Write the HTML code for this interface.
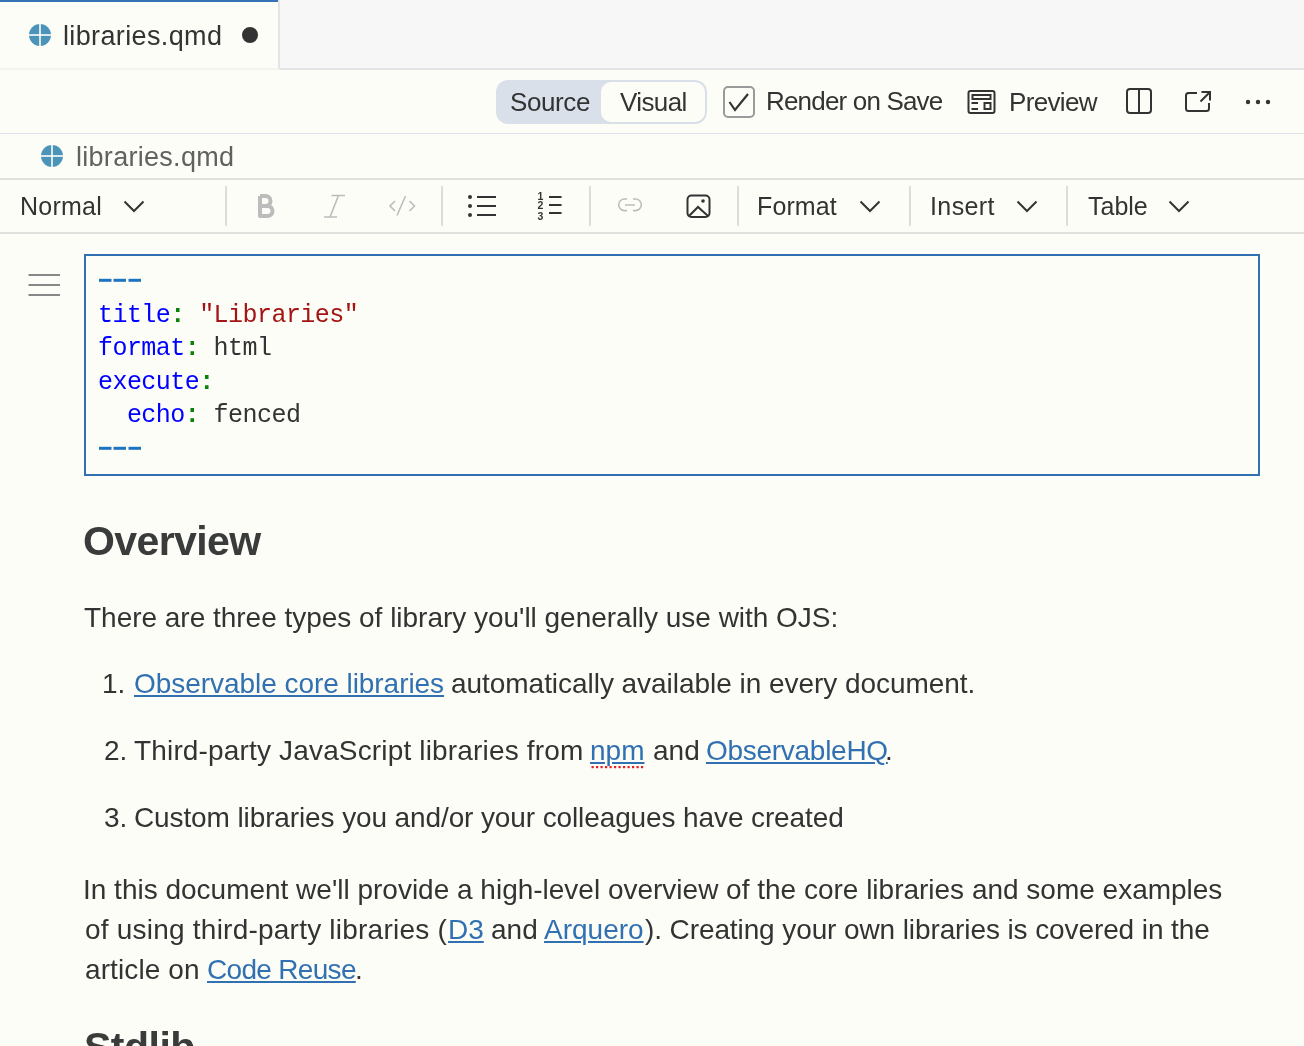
<!DOCTYPE html>
<html><head><meta charset="utf-8">
<style>
html,body{margin:0;padding:0;}
body{width:1304px;height:1046px;overflow:hidden;position:relative;background:#fdfdf7;font-family:"Liberation Sans",sans-serif;color:#333;}
.a{position:absolute;white-space:nowrap;}
.t{position:absolute;white-space:nowrap;line-height:1;will-change:transform;}
svg#ov{position:absolute;left:0;top:0;overflow:visible;}
#tabbar{position:absolute;left:0;top:0;width:1304px;height:68px;background:#f7f7f7;border-bottom:2px solid #e4e4e4;}
#tab{position:absolute;left:0;top:0;width:278px;height:68px;background:#fdfdf7;border-right:2px solid #e4e4e4;border-bottom:2px solid #f3f3f1;}
#tabtop{position:absolute;left:0;top:0;width:278px;height:2px;background:#3573b4;}
#tb{position:absolute;left:0;top:70px;width:1304px;height:63px;border-bottom:1px solid #dde2ea;}
#bc{position:absolute;left:0;top:134px;width:1304px;height:44px;border-bottom:2px solid #e0e0de;}
#ft{position:absolute;left:0;top:180px;width:1304px;height:52px;border-bottom:2px solid #e0e0de;}
.sep{position:absolute;top:186px;width:2px;height:40px;background:#dfdfdd;}
#yaml{position:absolute;left:84px;top:254px;width:1172px;height:218px;border:2px solid #3171b2;}
.mono{font-family:"Liberation Mono",monospace;font-size:25px;letter-spacing:-0.55px;white-space:pre;}
.kw{color:#0000ff;}
.col{color:#098209;font-weight:bold;}
.str{color:#a31515;}
.dash{color:#1e73c2;}
.body{font-size:28px;color:#333;}
a{color:#3171b2;text-decoration:underline;text-decoration-thickness:2px;text-underline-offset:2px;}
</style></head><body>
<div id="tabbar"></div>
<div id="tab"></div>
<div id="tabtop"></div>
<div id="tb"></div>
<div id="bc"></div>
<div id="ft"></div>

<!-- tab -->
<div class="t" id="tabl" style="left:63.00px;top:23.14px;font-size:27px;color:#333;letter-spacing:0.363px;">libraries.qmd</div>

<!-- toolbar -->
<div class="a" style="left:496px;top:80px;width:211px;height:44px;border-radius:12px;background:#dae0ea;"></div>
<div class="a" style="left:601px;top:82px;width:104px;height:40px;border-radius:10px;background:#fdfdf7;"></div>
<div class="t" id="src" style="left:510.00px;top:88.99px;font-size:26px;color:#333;letter-spacing:-0.400px;">Source</div>
<div class="t" id="vis" style="left:620.00px;top:88.99px;font-size:26px;color:#333;letter-spacing:-0.600px;">Visual</div>
<div class="a" style="left:723px;top:86px;width:28px;height:28px;border:2px solid #9a9a9a;border-radius:5px;"></div>
<div class="t" id="ros" style="left:766.00px;top:88.49px;font-size:26px;color:#333;letter-spacing:-0.819px;">Render on Save</div>
<div class="t" id="prev" style="left:1009.00px;top:88.99px;font-size:26px;color:#333;letter-spacing:-0.667px;">Preview</div>

<!-- breadcrumb -->
<div class="t" id="bcl" style="left:76.00px;top:144.14px;font-size:27px;color:#616161;letter-spacing:0.287px;">libraries.qmd</div>

<!-- format toolbar -->
<div class="t" id="norm" style="left:20.22px;top:193.84px;font-size:25px;color:#333;letter-spacing:0.240px;">Normal</div>
<div class="sep" style="left:225px"></div>
<div class="sep" style="left:441px"></div>
<div class="sep" style="left:589px"></div>
<div class="sep" style="left:737px"></div>
<div class="sep" style="left:909px"></div>
<div class="sep" style="left:1066px"></div>
<div class="t" id="fmt" style="left:757.00px;top:193.84px;font-size:25px;color:#333;letter-spacing:0.120px;">Format</div>
<div class="t" id="ins" style="left:930.00px;top:193.84px;font-size:25px;color:#333;letter-spacing:0.400px;">Insert</div>
<div class="t" id="tbl" style="left:1088.00px;top:193.84px;font-size:25px;color:#333;letter-spacing:0.000px;">Table</div>


<!-- hamburger -->

<div id="yaml"></div>
<div class="t mono" id="m1" style="left:97.5px;top:302.8px;"><span class="kw">title</span><span class="col">:</span> <span class="str">"Libraries"</span></div>
<div class="t mono" id="m2" style="left:97.5px;top:336.1px;"><span class="kw">format</span><span class="col">:</span> html</div>
<div class="t mono" id="m3" style="left:97.5px;top:369.5px;"><span class="kw">execute</span><span class="col">:</span></div>
<div class="t mono" id="m4" style="left:97.5px;top:402.8px;">  <span class="kw">echo</span><span class="col">:</span> fenced</div>
<div class="t" id="h1" style="left:83.00px;top:521.29px;font-size:41px;font-weight:bold;color:#3a3c3c;letter-spacing:-0.594px;">Overview</div>
<div class="t body" id="p1" style="font-size:28px;left:84.00px;top:604.30px;letter-spacing:-0.019px;">There are three types of library you'll generally use with OJS:</div>
<div class="t body" id="l1a" style="font-size:28px;left:102.00px;top:670.30px;letter-spacing:0.000px;">1.</div>
<div class="t body" id="l1b" style="font-size:28px;left:134.00px;top:670.30px;letter-spacing:-0.047px;"><a>Observable core libraries</a></div>
<div class="t body" id="l1c" style="font-size:28px;left:451.00px;top:670.30px;letter-spacing:-0.043px;">automatically available in every document.</div>
<div class="t body" id="l2a" style="font-size:28px;left:103.75px;top:737.30px;letter-spacing:0.000px;">2.</div>
<div class="t body" id="l2b" style="font-size:28px;left:133.86px;top:737.30px;letter-spacing:0.161px;">Third-party JavaScript libraries from</div>
<div class="t body" id="l2c" style="font-size:28px;left:589.75px;top:737.30px;letter-spacing:0.000px;"><a>npm</a></div>
<div class="t body" id="l2d" style="font-size:28px;left:652.73px;top:737.30px;letter-spacing:0.000px;">and</div>
<div class="t body" id="l2e" style="font-size:28px;left:705.73px;top:737.30px;letter-spacing:-0.279px;"><a>ObservableHQ</a></div>
<div class="t body" id="l2f" style="font-size:28px;left:885.00px;top:737.30px;letter-spacing:0.000px;">.</div>
<div class="t body" id="l3a" style="font-size:28px;left:103.75px;top:804.30px;letter-spacing:0.000px;">3.</div>
<div class="t body" id="l3b" style="font-size:28px;left:134.00px;top:804.30px;letter-spacing:-0.113px;">Custom libraries you and/or your colleagues have created</div>
<div class="t body" id="q1" style="font-size:28px;left:83.39px;top:876.30px;letter-spacing:-0.006px;">In this document we'll provide a high-level overview of the core libraries and some examples</div>
<div class="t body" id="q2a" style="font-size:28px;left:84.83px;top:916.30px;letter-spacing:0.224px;">of using third-party libraries (</div>
<div class="t body" id="q2b" style="font-size:28px;left:447.91px;top:916.30px;letter-spacing:0.000px;"><a>D3</a></div>
<div class="t body" id="q2c" style="font-size:28px;left:490.64px;top:916.30px;letter-spacing:0.000px;">and</div>
<div class="t body" id="q2d" style="font-size:28px;left:544.00px;top:916.30px;letter-spacing:-0.003px;"><a>Arquero</a></div>
<div class="t body" id="q2e" style="font-size:28px;left:645.00px;top:916.30px;letter-spacing:-0.103px;">). Creating your own libraries is covered in the</div>
<div class="t body" id="q3a" style="font-size:28px;left:84.83px;top:956.30px;letter-spacing:0.111px;">article on</div>
<div class="t body" id="q3b" style="font-size:28px;left:206.55px;top:956.30px;letter-spacing:-0.689px;"><a>Code Reuse</a></div>
<div class="t body" id="q3c" style="font-size:28px;left:355.00px;top:956.30px;letter-spacing:0.000px;">.</div>
<div class="t" id="h2" style="left:83.85px;top:1026.79px;font-size:41px;font-weight:bold;color:#3a3c3c;letter-spacing:-0.500px;">Stdlib</div>
<svg id="ov" width="1304" height="1046" viewBox="0 0 1304 1046">
<!-- quarto icons -->
<g id="qi1"><circle cx="40" cy="35" r="11" fill="#4b93b8"/><rect x="39.2" y="24" width="1.6" height="22" fill="#fdfdf7"/><rect x="29" y="34.2" width="22" height="1.6" fill="#fdfdf7"/></g>
<circle cx="250" cy="35" r="8" fill="#333"/>
<g><circle cx="52" cy="156" r="11" fill="#4b93b8"/><rect x="51.2" y="145" width="1.6" height="22" fill="#fdfdf7"/><rect x="41" y="155.2" width="22" height="1.6" fill="#fdfdf7"/></g>
<!-- checkbox check -->
<path d="M729.5 102 L735 110 L748 94" fill="none" stroke="#333" stroke-width="2.2"/>
<!-- preview icon -->
<g fill="none" stroke="#333" stroke-width="2">
<rect x="968.5" y="91" width="26" height="22" rx="2"/>
<rect x="972.5" y="95" width="18" height="4"/>
<path d="M971.5 103 H978 M971.5 109 H978"/>
<rect x="984.5" y="103" width="6" height="6"/>
<!-- split -->
<rect x="1127" y="89" width="24" height="24" rx="3"/>
<path d="M1139 89 V113"/>
<!-- external -->
<path d="M1197 93 H1188.5 Q1186 93 1186 95.5 V108.5 Q1186 111 1188.5 111 H1206.5 Q1209 111 1209 108.5 V103"/>
<path d="M1200.5 101.5 L1209.5 92.5 M1201.5 92 H1210 V100.5"/>
</g>
<circle cx="1248" cy="102" r="2.2" fill="#333"/><circle cx="1258" cy="102" r="2.2" fill="#333"/><circle cx="1268" cy="102" r="2.2" fill="#333"/>
<!-- chevrons -->
<g fill="none" stroke="#333" stroke-width="2">
<path d="M124.5 201.5 L134 211 L143.5 201.5"/>
<path d="M860.5 201.5 L870 211 L879.5 201.5"/>
<path d="M1017.5 201.5 L1027 211 L1036.5 201.5"/>
<path d="M1169.5 201.5 L1179 211 L1188.5 201.5"/>
</g>
<!-- separators -->
<g fill="#dcdcda">
<rect x="225" y="186" width="2" height="40"/>
<rect x="441" y="186" width="2" height="40"/>
<rect x="589" y="186" width="2" height="40"/>
<rect x="737" y="186" width="2" height="40"/>
<rect x="909" y="186" width="2" height="40"/>
<rect x="1066" y="186" width="2" height="40"/>
</g>
<!-- bold -->
<path d="M260 196 V216 H267.5 A5 5 0 0 0 267.5 206 H260 M260 206 H265.5 A5 5 0 0 0 265.5 196 H260" fill="none" stroke="#bcbcbc" stroke-width="4" stroke-linejoin="round"/>
<!-- italic -->
<path d="M331.5 195.5 H345 M324 217 H337 M338.5 195.5 L330 217" fill="none" stroke="#bcbcbc" stroke-width="1.6"/>
<!-- code -->
<path d="M395 201 L390 206 L395 211 M405.5 196 L397 215.5 M409.5 201 L414.5 206 L409.5 211" fill="none" stroke="#bcbcbc" stroke-width="1.6"/>
<!-- bullet list -->
<g fill="#333"><circle cx="470" cy="197" r="2"/><circle cx="470" cy="206" r="2"/><circle cx="470" cy="215" r="2"/></g>
<path d="M477 197 H496 M477 206 H496 M477 215 H496" stroke="#333" stroke-width="1.8"/>
<!-- ordered list -->
<g fill="#333" font-family="Liberation Sans" font-weight="bold" font-size="10.5px">
<text x="537.5" y="200">1</text><text x="537.5" y="209">2</text><text x="537.5" y="219.5">3</text>
</g>
<path d="M549 197 H561.5 M549 205 H561.5 M549 213 H561.5" stroke="#333" stroke-width="1.8"/>
<!-- link -->
<path d="M627 199 H624.5 A5.8 5.8 0 0 0 624.5 210.6 H627 M633 199 H635.5 A5.8 5.8 0 0 1 635.5 210.6 H633 M625 205 H635" fill="none" stroke="#bcbcbc" stroke-width="1.6"/>
<!-- image -->
<rect x="687.5" y="195.5" width="22" height="21.5" rx="4" fill="none" stroke="#333" stroke-width="2"/>
<path d="M689 216 L698 207 L708 216" fill="none" stroke="#333" stroke-width="2"/>
<circle cx="703" cy="201" r="1.8" fill="#333"/>
<g fill="#e81c1c"><rect x="591.5" y="766" width="2.2" height="2.2"/><rect x="596.0" y="766" width="2.2" height="2.2"/><rect x="600.5" y="766" width="2.2" height="2.2"/><rect x="605.0" y="766" width="2.2" height="2.2"/><rect x="609.5" y="766" width="2.2" height="2.2"/><rect x="614.0" y="766" width="2.2" height="2.2"/><rect x="618.5" y="766" width="2.2" height="2.2"/><rect x="623.0" y="766" width="2.2" height="2.2"/><rect x="627.5" y="766" width="2.2" height="2.2"/><rect x="632.0" y="766" width="2.2" height="2.2"/><rect x="636.5" y="766" width="2.2" height="2.2"/><rect x="641.0" y="766" width="2.2" height="2.2"/></g>
<!-- hamburger -->
<path d="M28.5 275 H60 M28.5 285 H60 M28.5 295 H60" stroke="#888" stroke-width="1.8"/>
<!-- yaml dashes -->
<g fill="#1f74c0">
<rect x="99" y="278.8" width="12.5" height="3"/><rect x="113.5" y="278.8" width="12.5" height="3"/><rect x="128.5" y="278.8" width="12.5" height="3"/>
<rect x="99" y="446.8" width="12.5" height="3"/><rect x="113.5" y="446.8" width="12.5" height="3"/><rect x="128.5" y="446.8" width="12.5" height="3"/>
</g>
</svg>
</body></html>
